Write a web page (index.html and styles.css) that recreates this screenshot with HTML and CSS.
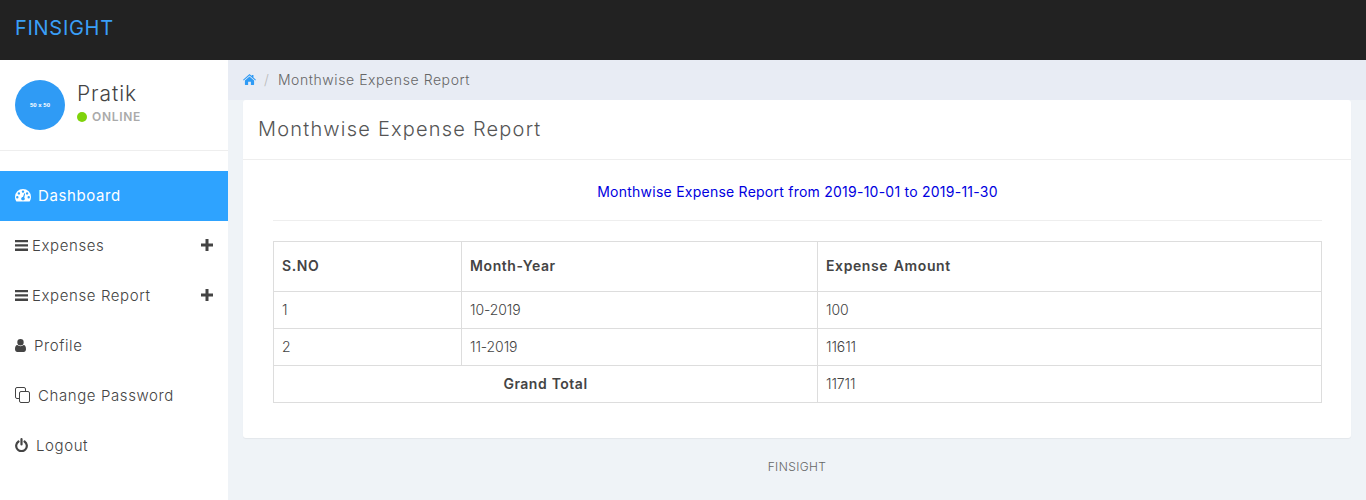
FILE: index.html
```html
<!DOCTYPE html>
<html lang="en">
<head>
<meta charset="utf-8">
<title>FINSIGHT</title>
<link rel="stylesheet" href="styles.css">
</head>
<body>
<header class="topbar"><a class="brand">FINSIGHT</a></header>
<div class="layout">
  <aside class="sidebar">
    <div class="user">
      <div class="avatar">50 x 50</div>
      <div class="user-info">
        <div class="user-name">Pratik</div>
        <div class="user-status"><span class="dot"></span>ONLINE</div>
      </div>
    </div>
    <nav class="menu">
      <a class="item active">
        <svg class="ic ic-dash" viewBox="0 0 16 14"><path fill="currentColor" fill-rule="evenodd" d="M8 1a8 8 0 0 0-8 8c0 1.600.4 3 1.200 4.200.2.300.4.300.7.300h12.200c.3 0 .5 0 .7-.3C15.600 12 16 10.600 16 9a8 8 0 0 0-8-8zM8 2.400a1.200 1.200 0 1 1 0 2.400 1.200 1.200 0 0 1 0-2.400zM3.900 4.200a1.200 1.200 0 1 1 0 2.400 1.200 1.200 0 0 1 0-2.400zM12.100 4.200a1.200 1.200 0 1 1 0 2.400 1.200 1.200 0 0 1 0-2.400zM2.300 8a1.200 1.200 0 1 1 0 2.400 1.200 1.200 0 0 1 0-2.400zM13.700 8a1.200 1.200 0 1 1 0 2.400 1.200 1.200 0 0 1 0-2.400zM9.300 5.200l.9.300-1 4c.4.300.6.700.6 1.200 0 .9-.8 1.600-1.800 1.600s-1.800-.7-1.800-1.600.8-1.600 1.800-1.600z"/></svg>
        <span>Dashboard</span>
      </a>
      <a class="item">
        <svg class="ic ic-bars" viewBox="0 0 13 11"><path fill="currentColor" d="M0 0h13v2.300H0zM0 4.300h13v2.300H0zM0 8.600h13v2.400H0z"/></svg>
        <span>Expenses</span>
        <svg class="plus" viewBox="0 0 12 12"><path fill="currentColor" d="M4.500 0h3v4.500H12v3H7.500V12h-3V7.500H0v-3h4.500z"/></svg>
      </a>
      <a class="item">
        <svg class="ic ic-bars" viewBox="0 0 13 11"><path fill="currentColor" d="M0 0h13v2.300H0zM0 4.300h13v2.300H0zM0 8.600h13v2.400H0z"/></svg>
        <span>Expense Report</span>
        <svg class="plus" viewBox="0 0 12 12"><path fill="currentColor" d="M4.500 0h3v4.500H12v3H7.500V12h-3V7.500H0v-3h4.500z"/></svg>
      </a>
      <a class="item">
        <svg class="ic ic-user" viewBox="0 0 11 13"><path fill="currentColor" d="M5.500 0a3.200 3.200 0 1 1 0 6.400 3.200 3.200 0 0 1 0-6.400zM2.300 6.100c.8.700 1.900 1.100 3.200 1.100s2.400-.4 3.200-1.100C10.200 6.300 11 7.700 11 10.300c0 1.600-1 2.700-2.300 2.700H2.300C1 13 0 11.900 0 10.300 0 7.700.8 6.300 2.300 6.100z"/></svg>
        <span>Profile</span>
      </a>
      <a class="item">
        <svg class="ic ic-copy" viewBox="0 0 15 16"><g fill="none" stroke="currentColor" stroke-width="1"><path d="M10.500 4.500V2a1.500 1.500 0 0 0-1.500-1.500H2A1.500 1.500 0 0 0 .5 2v8A1.500 1.500 0 0 0 2 11.500h2.500"/><rect x="4.500" y="4.500" width="10" height="11" rx="1.500" fill="#fff"/></g></svg>
        <span>Change Password</span>
      </a>
      <a class="item">
        <svg class="ic ic-power" viewBox="0 0 13 14"><path fill="none" stroke="currentColor" stroke-width="2.200" stroke-linecap="round" d="M6.500 1.200v5.300M3.500 3.500a5.300 5.300 0 1 0 6 0"/></svg>
        <span>Logout</span>
      </a>
    </nav>
  </aside>
  <main class="content">
    <div class="crumbs">
      <svg class="home" viewBox="0 0 14 12"><path fill="currentColor" d="M7 0l2.500 2.200V1h1.800v2.800L14 6.200l-.7.800L7 1.500.7 7 0 6.200zM7 2.800l5 4.300V11.500a.5.500 0 0 1-.5.500H8.500V8.500h-3V12H2.500a.5.500 0 0 1-.5-.5V7.100z"/></svg>
      <span class="sep">/</span>
      <span class="crumb-text">Monthwise Expense Report</span>
    </div>
    <section class="card">
      <h2 class="card-title">Monthwise Expense Report</h2>
      <div class="card-body">
        <p class="report-range">Monthwise Expense Report from 2019-10-01 to 2019-11-30</p>
        <hr class="rule">
        <table class="report">
          <colgroup><col class="c1"><col class="c2"><col class="c3"></colgroup>
          <thead><tr><th>S.NO</th><th>Month-Year</th><th>Expense Amount</th></tr></thead>
          <tbody>
            <tr><td>1</td><td>10-2019</td><td>100</td></tr>
            <tr><td>2</td><td>11-2019</td><td>11611</td></tr>
            <tr><th colspan="2" class="total">Grand Total</th><td>11711</td></tr>
          </tbody>
        </table>
      </div>
    </section>
    <footer class="foot">FINSIGHT</footer>
  </main>
</div>
</body>
</html>
```
FILE: styles.css
```css
* { box-sizing: border-box; }
html, body { height: 500px; overflow: hidden; }
body {
  margin: 0;
  font-family: "Inter", "Noto Sans", sans-serif;
  font-size: 14px;
  color: #444;
  background: #eff3f7;
}
.topbar {
  height: 60px;
  background: #222;
  display: flex;
  align-items: center;
  padding: 0 0 4px 15px;
}
.brand {
  color: #3a9ff7;
  font-size: 20px;
  font-weight: 400;
  letter-spacing: 0.7px;
}
.layout { display: flex; height: 440px; }
.sidebar { width: 228px; background: #fff; flex: none; }
.user {
  height: 91px;
  padding: 20px 15px 0;
  display: flex;
  border-bottom: 1px solid #eee;
}
.avatar {
  width: 50px;
  height: 50px;
  border-radius: 50%;
  background: #2f9bf5;
  color: #fff;
  font-family: "Liberation Sans", sans-serif;
  font-size: 6px;
  font-weight: 700;
  display: flex;
  align-items: center;
  justify-content: center;
  flex: none;
}
.user-info { margin-left: 12px; }
.user-name {
  font-size: 21px;
  font-weight: 300;
  line-height: 28px;
  color: #444;
  letter-spacing: 0.9px;
}
.user-status {
  display: flex;
  align-items: center;
  font-size: 12px;
  font-weight: 600;
  color: #aaa;
  line-height: 16px;
  margin-top: 1px;
  letter-spacing: 0.7px;
}
.dot {
  width: 10px;
  height: 10px;
  border-radius: 50%;
  background: #7fd30b;
  margin-right: 5px;
}
.menu { margin-top: 20px; }
.item {
  height: 50px;
  display: flex;
  align-items: center;
  padding: 0 15px 2px;
  font-size: 15px;
  font-weight: 300;
  color: #444;
  letter-spacing: 0.6px;
}
.item.active { background: #2ea3ff; color: #fff; font-weight: 400; }
.ic { flex: none; }
.ic-dash { width: 16px; height: 14px; margin-right: 7px; }
.ic-bars { width: 13px; height: 11px; margin-right: 4px; }
.ic-user { width: 11px; height: 13px; margin-right: 8px; }
.ic-copy { width: 15px; height: 16px; margin-right: 8px; }
.ic-power { width: 13px; height: 14px; margin-right: 8px; }
.plus { width: 12px; height: 12px; margin-left: auto; }
.content { flex: 1; min-width: 0; }
.crumbs {
  height: 40px;
  background: #e8ecf4;
  display: flex;
  align-items: center;
  padding: 0 0 2px 15px;
  font-size: 14px;
  font-weight: 300;
  color: #666;
}
.home { width: 13px; height: 11px; color: #2f9bf5; }
.sep { color: #bbb; margin: 0 9px 0 8px; }
.crumb-text { letter-spacing: 0.58px; }
.card {
  margin: 0 15px;
  height: 338px;
  background: #fff;
  border-radius: 3px;
  box-shadow: 0 1px 1px rgba(0,0,0,0.05);
}
.card-title {
  margin: 0;
  height: 60px;
  padding: 0 15px 2px;
  display: flex;
  align-items: center;
  font-size: 20px;
  font-weight: 300;
  color: #555;
  letter-spacing: 1.2px;
  border-bottom: 1px solid #eee;
}
.card-body { padding: 20px 29px 0 30px; }
.report-range {
  margin: 0;
  text-align: center;
  color: #0000e0;
  font-size: 14px;
  line-height: 24px;
  font-weight: 400;
  letter-spacing: 0.24px;
}
.rule { border: 0; border-top: 1px solid #eee; margin: 16px 0 20px; }
.report { width: 100%; border-collapse: collapse; table-layout: fixed; font-size: 14px; }
.c1 { width: 188px; }
.c2 { width: 356px; }
.report th, .report td {
  border: 1px solid #ddd;
  padding: 8px;
  text-align: left;
  line-height: 20px;
  height: 37px;
}
.report td { font-weight: 300; letter-spacing: -0.1px; }
.report th { font-weight: 600; color: #444; letter-spacing: 0.6px; word-spacing: 1.5px; }
.report thead th { height: 50px; padding-bottom: 10px; }
.report .total { text-align: center; letter-spacing: 0.5px; word-spacing: 0.5px; }
.foot {
  text-align: center;
  font-size: 12px;
  font-weight: 300;
  color: #666;
  margin-top: 21px;
  line-height: 16px;
  letter-spacing: 0.4px;
}
```
